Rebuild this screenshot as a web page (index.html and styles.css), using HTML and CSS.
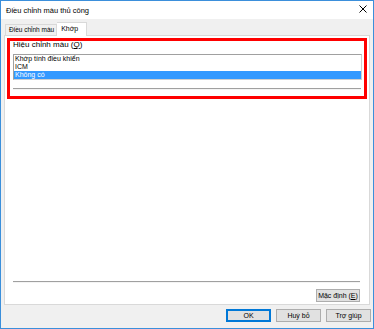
FILE: index.html
```html
<!DOCTYPE html>
<html lang="vi">
<head>
    <meta charset="UTF-8">
    <title>Điều chỉnh màu thủ công</title>
    <link rel="stylesheet" href="styles.css">
</head>
<body>
    <div class="window">
        <div class="titlebar">
            <span class="title">Điều chỉnh màu thủ công</span>
            <svg class="close" width="8" height="8" viewBox="0 0 8 8">
                <path d="M0.5 0.5 L7.5 7.5 M7.5 0.5 L0.5 7.5" stroke="#000" stroke-width="1" fill="none"/>
            </svg>
        </div>

        <div class="tabs">
            <div class="tab">Điều chỉnh màu</div>
            <div class="tab active">Khớp</div>
        </div>

        <div class="panel">
            <div class="group">
                <div class="group-label">Hiệu chỉnh màu (<u>Q</u>)</div>
                <div class="listbox">
                    <div class="item">Khớp tính điều khiển</div>
                    <div class="item">ICM</div>
                    <div class="item selected">Không có</div>
                </div>
                <div class="separator"></div>
            </div>

            <div class="spacer"></div>

            <div class="separator bottom-sep"></div>
            <div class="default-row">
                <button class="btn">Mặc định (<u>E</u>)</button>
            </div>
        </div>

        <div class="footer">
            <button class="btn primary">OK</button>
            <button class="btn">Huỷ bỏ</button>
            <button class="btn">Trợ giúp</button>
        </div>
    </div>
</body>
</html>
```

FILE: styles.css
```css
* {
    box-sizing: border-box;
}

body {
    margin: 0;
    padding: 0;
    font-family: 'Liberation Sans', Arial, sans-serif;
    font-size: 7px;
    color: #000;
}

.window {
    width: 374px;
    height: 329px;
    border: 1px solid #3b8fdb;
    background-color: #f0f0f0;
    display: flex;
    flex-direction: column;
}

.titlebar {
    height: 18px;
    background-color: #fff;
    display: flex;
    align-items: center;
    justify-content: space-between;
    padding: 0 6px 0 5px;
}

.title {
    font-size: 7.5px;
}

.close {
    display: block;
    margin-top: -2px;
}

.tabs {
    height: 16px;
    display: flex;
    align-items: flex-end;
    padding-left: 4px;
}

.tab {
    height: 11px;
    line-height: 10px;
    font-size: 6.5px;
    padding: 0 2px 0 3px;
    border: 1px solid #d9d9d9;
    border-bottom: none;
    background-color: #f0f0f0;
    white-space: nowrap;
}

.tab.active {
    height: 14px;
    line-height: 12px;
    font-size: 7px;
    padding: 0 8px 0 4px;
    background-color: #fff;
    border-left: none;
    margin-bottom: -1px;
    position: relative;
    z-index: 1;
}

.panel {
    height: 270px;
    margin: 0 3px;
    border: 1px solid #d9d9d9;
    background-color: #fff;
    display: flex;
    flex-direction: column;
    padding: 2px;
}

.group {
    border: 3px solid #f00;
    padding: 0 0 6px 3px;
}

.group-label {
    height: 8px;
    line-height: 8px;
    font-size: 8px;
}

.listbox {
    margin: 5px 2px 0 0;
    height: 26px;
    border: 1px solid #a0a0a0;
    border-right-color: #cfcfcf;
    border-bottom-color: #cfcfcf;
    background-color: #fff;
}

.item {
    height: 8px;
    line-height: 8px;
    padding-left: 1px;
    white-space: nowrap;
}

.item.selected {
    background-color: #3399ff;
    color: #fff;
}

.separator {
    height: 2px;
    border-top: 1px solid #a0a0a0;
    border-bottom: 1px solid #f4f4f4;
    margin: 8px 3px 0 0;
}

.spacer {
    flex: 1;
}

.bottom-sep {
    margin: 0 7px 0 6px;
}

.default-row {
    display: flex;
    justify-content: flex-end;
    padding: 6px 7px 0 0;
}

.btn {
    width: 45px;
    height: 13px;
    padding: 0;
    font-family: inherit;
    font-size: 7px;
    line-height: 11px;
    white-space: nowrap;
    color: #000;
    background-color: #e1e1e1;
    border: 1px solid #adadad;
    border-radius: 0;
}

.default-row .btn {
    width: 44px;
}

.btn.primary {
    border-color: #0078d7;
    box-shadow: inset 0 0 0 1px #0078d7;
}

.footer {
    display: flex;
    justify-content: flex-end;
    gap: 5px;
    padding: 4px 2px 0 0;
}
```
